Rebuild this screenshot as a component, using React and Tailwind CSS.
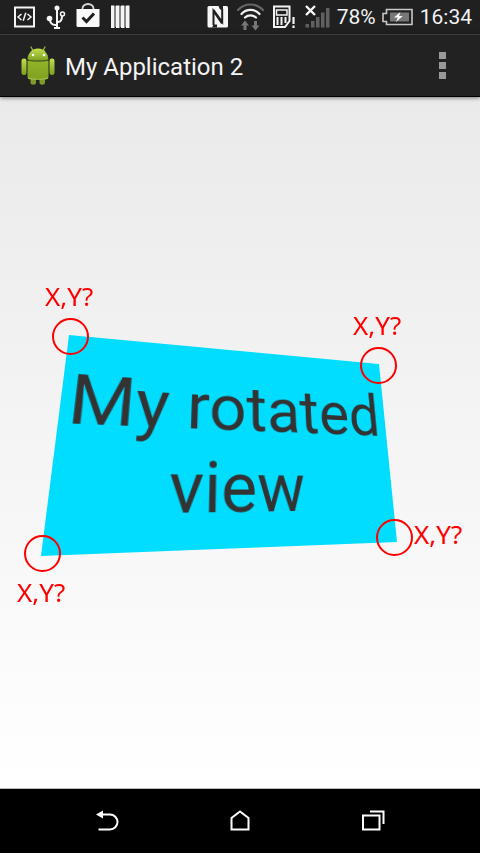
import React from "react";

const VIEW_WIDTH = 334;
const VIEW_HEIGHT = 200;

// Corners of the projected view, clockwise from the top left.
const CORNERS = [
  [69, 63],
  [379, 92],
  [397, 270],
  [41, 284],
];

// Perspective matrix that projects a width x height box onto four corners.
function projectOnto(width, height, [[x0, y0], [x1, y1], [x2, y2], [x3, y3]]) {
  const dx1 = x1 - x2;
  const dx2 = x3 - x2;
  const dy1 = y1 - y2;
  const dy2 = y3 - y2;
  const sx = x0 - x1 + x2 - x3;
  const sy = y0 - y1 + y2 - y3;
  const det = dx1 * dy2 - dx2 * dy1;
  const g = (sx * dy2 - sy * dx2) / det;
  const h = (dx1 * sy - dy1 * sx) / det;
  const m = [
    (x1 - x0 + g * x1) / width, (y1 - y0 + g * y1) / width, 0, g / width,
    (x3 - x0 + h * x3) / height, (y3 - y0 + h * y3) / height, 0, h / height,
    0, 0, 1, 0,
    x0, y0, 0, 1,
  ];
  return `matrix3d(${m.map((v) => v.toFixed(8)).join(",")})`;
}

function StatusBar() {
  return (
    <header className="flex h-[34px] items-center justify-between bg-[#202020] pr-2 pl-[14px] text-[21px] leading-[36px] text-[#f2f2f2]">
      <div className="flex gap-[10px]">
        <svg width="22" height="34" viewBox="14 0 22 34" fill="none" stroke="#f4f4f4">
          <rect x="15" y="7.5" width="19" height="19" strokeWidth="2" />
          <path d="M21.5 14 18 17l3.500 3M27.500 14l3.500 3-3.500 3M25.800 12.800l-2.600 8" strokeWidth="1.500" />
        </svg>
        <svg width="20" height="34" viewBox="46 0 20 34" fill="none" stroke="#f4f4f4">
          <path d="M57 8v19M57 25h-1.500c-3.500 0-5.500-1.500-5.800-6.500M57 22h1c3 0 4-2 4-6" strokeWidth="2" />
          <circle cx="57" cy="8" r="2.500" fill="#f4f4f4" stroke="none" />
          <circle cx="49.500" cy="18.500" r="2.800" fill="#f4f4f4" stroke="none" />
          <circle cx="62.500" cy="14" r="2" strokeWidth="1.500" />
          <path d="M54 28h6" strokeWidth="2" />
        </svg>
        <svg width="24" height="34" viewBox="76 0 24 34" fill="none">
          <path d="M82.500 10V8.500a5.500 4.500 0 0 1 11 0V10" stroke="#d8d8d8" strokeWidth="1.800" />
          <path d="M76.500 9h23v16.500a1.500 1.500 0 0 1-1.500 1.500H78a1.500 1.500 0 0 1-1.500-1.500z" fill="#fafafa" />
          <path d="m82.500 17.500 4 4 7.500-8" stroke="#202020" strokeWidth="3" />
        </svg>
        <svg width="20" height="34" viewBox="110 0 20 34">
          <path d="M111 5.500h3.500V28H111zM116 5.500h3.500V28H116zM121 5.500h3.500V28H121zM126 5.500h3.500V28H126z" fill="#f4f4f4" />
          <path d="M114.500 6h1.500v21h-1.500zM119.500 6h1.500v21h-1.500zM124.500 6h1.500v21h-1.500z" fill="#858585" />
        </svg>
      </div>
      <div className="flex items-center gap-[6px]">
        <svg width="22" height="34" viewBox="207 0 22 34" fill="none">
          <rect x="207.500" y="6" width="20.500" height="21.500" rx="1.500" fill="#f6f6f6" />
          <path d="M213.500 25V11l8.500 12.500M213.500 10l8.700 12V9" stroke="#202020" strokeWidth="2" />
          <path d="M213.500 24.500h3.500v3h-5zM218.500 6h4.500v3.500h-3z" fill="#202020" />
        </svg>
        <svg width="32" height="34" viewBox="235 0 32 34" fill="none" strokeLinecap="round">
          <path d="M238 10a17 17 0 0 1 25 0" stroke="#666" strokeWidth="2.200" />
          <path d="M241.500 14a12 12 0 0 1 18 0M245 17.500a8 8 0 0 1 11 0" stroke="#f2f2f2" strokeWidth="2.200" />
          <path d="m241 25.500 4-5 4 5h-2.500V30h-3v-4.500zM251.500 25.500h2.500V21h3v4.500h2.500l-4 5z" fill="#777" />
        </svg>
        <svg width="24" height="34" viewBox="273 0 24 34" fill="none">
          <path d="M274 6.500h15.500V21l-4.500 6h-11z" stroke="#f4f4f4" strokeWidth="2" />
          <path d="M276.500 10h10.500v5h-10.500z" stroke="#f4f4f4" strokeWidth="1.500" />
          <path d="M277.500 17v8M281.500 17v8M285.500 17v6" stroke="#f4f4f4" strokeWidth="2" />
          <path d="M293.500 17v7M293.500 25.500V28" stroke="#f4f4f4" strokeWidth="2.200" />
        </svg>
        <svg width="28" height="34" viewBox="303 0 28 34" fill="none">
          <path d="m306 6 9 9M315 6l-9 9" stroke="#f8f8f8" strokeWidth="2.400" />
          <path d="M305.500 24h3.500v3.500h-3.500zM311 21h3.500v6.500H311zM316 17h3.500v10.500H316zM321 12.500h3.500v15H321zM326 8h3.500v19.500H326z" fill="#606060" />
        </svg>
        <span>78%</span>
        <svg width="32" height="34" viewBox="381 0 32 34" fill="none">
          <path d="M385.500 9.500H411v15h-25.500v-3H382v-8h3.500z" stroke="#c8c8c8" strokeWidth="1.600" />
          <path d="M389 12.500h19v9h-19z" fill="#777" />
          <path d="m399.500 12-6.500 5.500h3.800L395 22l6.800-6H398z" fill="#fff" />
        </svg>
        <span>16:34</span>
      </div>
    </header>
  );
}

function AndroidRobot() {
  return (
    <svg width="36" height="42" viewBox="20 44 36 42" aria-hidden="true">
      <defs>
        <linearGradient id="skin" x1="0" y1="0" x2="0" y2="1">
          <stop offset="0" stopColor="#c0de4e" />
          <stop offset="1" stopColor="#7d9f20" />
        </linearGradient>
        <linearGradient id="body" x1="0" y1="0" x2="0" y2="1">
          <stop offset="0" stopColor="#92b42a" />
          <stop offset="1" stopColor="#7fa01f" />
        </linearGradient>
      </defs>
      <path d="m31 46 2.500 4.500M45 46l-2.500 4.500" stroke="#9dbd38" strokeWidth="1.300" strokeLinecap="round" />
      <path d="M30.500 76h5.500v5.500a2.700 2.200 0 0 1-5.500 0zM39.500 76H45v5.500a2.700 2.200 0 0 1-5.500 0z" fill="#7c9c26" />
      <rect x="21.500" y="57.500" width="5" height="16.500" rx="2.300" fill="url(#skin)" />
      <rect x="49.500" y="57.500" width="5" height="16.500" rx="2.300" fill="url(#skin)" />
      <path d="M27.500 60h21v15.500a3 3 0 0 1-3 3h-15a3 3 0 0 1-3-3z" fill="url(#body)" />
      <path d="M28 77c4 1.700 16 1.700 20 0" stroke="#b6cf63" strokeWidth=".8" fill="none" />
      <path d="M27.500 58.500a10.500 11 0 0 1 21 0c-5 1.800-16 1.800-21 0z" fill="url(#skin)" />
      <path d="M27.500 59c5 1.600 16 1.600 21 0" stroke="#4d641a" strokeWidth="1.200" fill="none" />
      <circle cx="33" cy="54" r="1.300" fill="#fff" />
      <circle cx="44" cy="54" r="1.300" fill="#fff" />
    </svg>
  );
}

function ActionBar() {
  return (
    <div className="relative z-10 flex h-[63px] items-center border-t border-b border-t-[#3c3c3c] border-b-black bg-[#222] pr-5 pl-5 shadow-[0_1px_4px_rgba(0,0,0,0.5)]">
      <AndroidRobot />
      <h1 className="ml-[9px] flex-1 pt-0.5 text-[24px] leading-8 text-[#f3f3f3]">My Application 2</h1>
      <button type="button" aria-label="More options" className="flex w-9 flex-col items-center gap-[3px]">
        <span className="size-[7px] bg-[#999]" />
        <span className="size-[7px] bg-[#999]" />
        <span className="size-[7px] bg-[#999]" />
      </button>
    </div>
  );
}

function Marker({ ring, label }) {
  return (
    <>
      <span className={`absolute size-[37px] rounded-full border-2 border-[#f00] ${ring}`} />
      <span className={`absolute font-['Noto_Sans',sans-serif] text-[26px] leading-[30px] text-[#f00] [font-kerning:none] ${label}`}>X,Y?</span>
    </>
  );
}

function RotatedView() {
  return (
    <div className="relative h-[341px] w-[480px] shrink-0">
      <div
        className="absolute top-0 left-0 flex h-[200px] w-[334px] origin-top-left items-center justify-center bg-[#00ddff] pt-2 text-center text-[67px] leading-[80px] whitespace-nowrap text-[#333]"
        style={{ transform: projectOnto(VIEW_WIDTH, VIEW_HEIGHT, CORNERS) }}
      >
        <p>
          My rotated
          <br />
          view
        </p>
      </div>
      <Marker ring="top-[46px] left-[52px]" label="top-[9px] left-[45px]" />
      <Marker ring="top-[75px] left-[360px]" label="top-[38px] left-[353px]" />
      <Marker ring="top-[263px] left-[24px]" label="top-[305px] left-[17px]" />
      <Marker ring="top-[247px] left-[376px]" label="top-[247px] left-[414px]" />
    </div>
  );
}

function NavigationBar() {
  return (
    <nav className="flex h-[65px] items-center justify-center gap-[85px] border-t border-[#bbb] bg-black">
      <button type="button" aria-label="Back" className="flex w-12 justify-center">
        <svg width="24" height="24" viewBox="95 809 24 24" fill="none" stroke="#fff" strokeWidth="2">
          <path d="M100 814.500h10a7.500 7.500 0 0 1 0 15H98.500" />
          <path d="m96 814.500 7-4v8z" fill="#fff" stroke="none" />
        </svg>
      </button>
      <button type="button" aria-label="Home" className="flex w-12 justify-center">
        <svg width="24" height="24" viewBox="228 809 24 24" fill="none" stroke="#fff" strokeWidth="2">
          <path d="M231.500 829.500V818l8.500-6.500 8.500 6.500v11.500z" />
        </svg>
      </button>
      <button type="button" aria-label="Recent apps" className="flex w-12 justify-center">
        <svg width="24" height="24" viewBox="361 809 24 24" fill="none" stroke="#fff" strokeWidth="2">
          <path d="M363 815.500h16.500v14H363zM370 811.500h13.500V824" />
        </svg>
      </button>
    </nav>
  );
}

export default function App() {
  return (
    <div className="flex min-h-screen flex-col font-[Roboto,sans-serif]">
      <StatusBar />
      <ActionBar />
      <main className="flex flex-1 items-center justify-center overflow-hidden bg-linear-to-b from-[#eaeaea] to-white">
        <RotatedView />
      </main>
      <NavigationBar />
    </div>
  );
}
